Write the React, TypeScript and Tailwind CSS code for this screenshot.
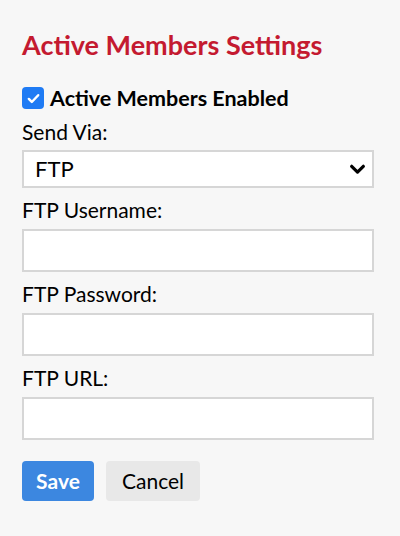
import { useState } from "react";

function Field({ label }: { label: string }) {
  return (
    <div className="flex flex-col">
      <label className="mt-[12px] mb-[9px] text-[21px] leading-[20px] text-black">{label}</label>
      <input
        type="text"
        className="h-[43px] w-[352px] border-2 border-[#d6d6d6] bg-white px-3 text-[20px] outline-none"
      />
    </div>
  );
}

export default function App() {
  const [enabled, setEnabled] = useState(true);

  return (
    <div className="min-h-[536px] w-[400px] bg-[#f7f7f7] px-[22px] pt-[30px] font-['Lato','Open_Sans',sans-serif] text-black">
      <h2 className="text-[27px] font-bold leading-[30px] text-[#c41a30]">Active Members Settings</h2>

      <label className="mt-[26px] flex items-center gap-[6px]" onClick={() => setEnabled(!enabled)}>
        <span className="flex h-[22px] w-[22px] items-center justify-center rounded-[4px] bg-[#1f7bf4]">
          {enabled && (
            <svg viewBox="0 0 16 16" className="h-[15px] w-[15px]" fill="none" stroke="white" strokeWidth="2.6" strokeLinecap="round" strokeLinejoin="round">
              <path d="M3 8.5l3.2 3.2L13 4.5" />
            </svg>
          )}
        </span>
        <span className="text-[21.5px] font-bold leading-[24px]">Active Members Enabled</span>
      </label>

      <div className="mt-[12px] text-[21px] leading-[20px]">Send Via:</div>
      <div className="mt-[8px] flex h-[38px] w-[352px] items-center border-2 border-[#d6d6d6] bg-white">
        <span className="ml-[11px] flex-1 text-[22px] leading-[24px]">FTP</span>
        <svg viewBox="0 0 16 16" className="mr-[6px] h-[17px] w-[17px]" fill="none" stroke="black" strokeWidth="3" strokeLinecap="round" strokeLinejoin="round">
          <path d="M2.5 5l5.5 5.5L13.5 5" />
        </svg>
      </div>

      <Field label="FTP Username:" />
      <Field label="FTP Password:" />
      <Field label="FTP URL:" />

      <div className="mt-[21px] flex gap-[12px]">
        <button className="h-[40px] w-[72px] rounded-[4px] bg-[#3c87e0] text-[21px] font-bold text-white">Save</button>
        <button className="h-[40px] w-[94px] rounded-[4px] bg-[#e8e8e8] text-[21px] text-black">Cancel</button>
      </div>
    </div>
  );
}
